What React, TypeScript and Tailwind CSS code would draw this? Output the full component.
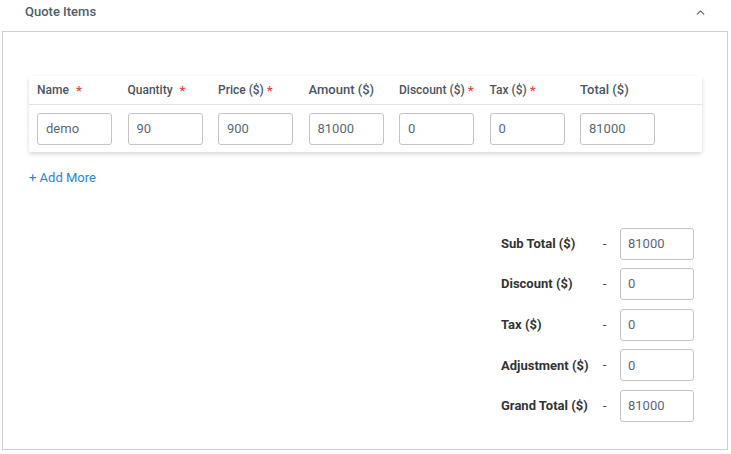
import { ChevronUp } from 'lucide-react';

const columns = [
  { label: 'Name', required: true, value: 'demo', big: false, gap: 'ml-[7px]' },
  { label: 'Quantity', required: true, value: '90', big: false, gap: 'ml-[7px]' },
  { label: 'Price ($)', required: true, value: '900', big: false, gap: 'ml-[3px]' },
  { label: 'Amount ($)', required: false, value: '81000', big: true, gap: '' },
  { label: 'Discount ($)', required: true, value: '0', big: false, gap: 'ml-[3px]' },
  { label: 'Tax ($)', required: true, value: '0', big: false, gap: 'ml-[3px]' },
  { label: 'Total ($)', required: false, value: '81000', big: true, gap: '' },
];

const totals = [
  { label: 'Sub Total ($)', value: '81000' },
  { label: 'Discount ($)', value: '0' },
  { label: 'Tax ($)', value: '0' },
  { label: 'Adjustment ($)', value: '0' },
  { label: 'Grand Total ($)', value: '81000' },
];

export default function App() {
  return (
    <div className="w-[731px] h-[454px] bg-white font-['Roboto',sans-serif] overflow-hidden">
      {/* Section header */}
      <div className="flex items-center justify-between h-[31px] pl-[25px] pr-[24px] pb-[7px]">
        <span className="text-[13px] font-medium text-[#4f5d69]">Quote Items</span>
        <ChevronUp className="w-[13px] h-[13px] text-[#5d6d78]" strokeWidth={2.5} />
      </div>

      {/* Section body */}
      <div className="ml-[2px] w-[726px] h-[419px] border border-[#cfcfcf] pt-[44px]">
        {/* Items table */}
        <div className="ml-[26px] w-[673px] bg-white shadow-[0_2px_4px_rgba(0,0,0,0.16)] rounded-[2px]">
          <div className="flex h-[29px] items-center px-[8px] border-b border-[#e2e2e2]">
            {columns.map((c) => (
              <div key={c.label} className="w-[90.5px] shrink-0 flex items-center">
                <span className={`${c.big ? 'text-[13px]' : 'text-[12px]'} font-medium text-[#4a5560]`}>{c.label}</span>
                {c.required && <span className={`text-[#f04444] text-[13px] font-bold leading-none ${c.gap}`}>*</span>}
              </div>
            ))}
          </div>
          <div className="flex px-[8px] pt-[8px] pb-[7px]">
            {columns.map((c) => (
              <div key={c.label} className="w-[90.5px] shrink-0">
                <div className="w-[75px] h-[32px] border border-[#c4c4c4] rounded-[3px] flex items-center pl-[8px] text-[13px] text-[#5a6875]">
                  {c.value}
                </div>
              </div>
            ))}
          </div>
        </div>

        <div className="ml-[26px] mt-[16px] text-[13px] text-[#1e88d6]">+ Add More</div>

        {/* Totals */}
        <div className="mt-[40px] ml-[498px] flex flex-col gap-[8.6px]">
          {totals.map((t) => (
            <div key={t.label} className="flex items-center h-[32px]">
              <span className="w-[102px] text-[13px] font-bold text-[#333]">{t.label}</span>
              <span className="w-[17px] text-[12px] text-[#333]">-</span>
              <div className="w-[74px] h-[32px] border border-[#c4c4c4] rounded-[3px] flex items-center pl-[7px] text-[13px] text-[#5a6875]">
                {t.value}
              </div>
            </div>
          ))}
        </div>
      </div>
    </div>
  );
}
